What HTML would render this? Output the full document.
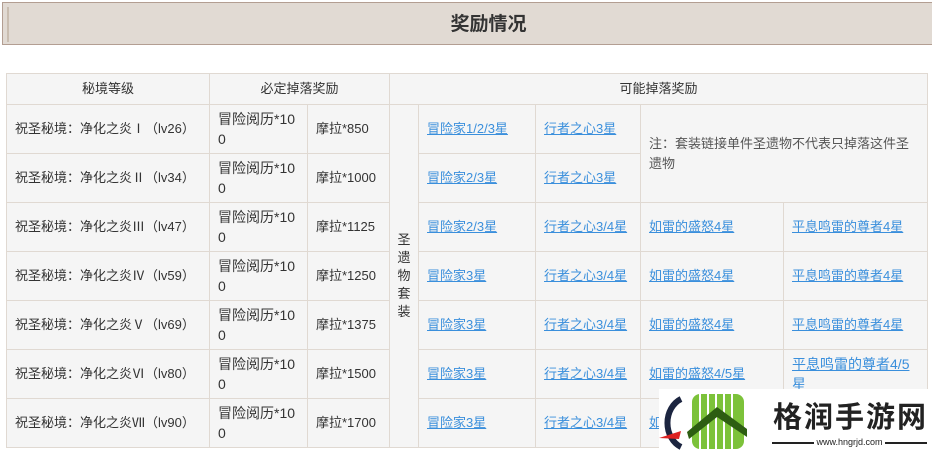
<!DOCTYPE html>
<html><head><meta charset="utf-8"><style>
*{margin:0;padding:0;box-sizing:border-box}
html,body{width:932px;height:454px;overflow:hidden}
body{background:#fff;position:relative;font-family:"Liberation Sans","Noto Sans CJK SC",sans-serif;color:#333;font-size:13px}
.bar{position:absolute;left:2px;top:2px;width:932px;height:43px;background:#e1dad3;border:1px solid #b39e92;border-right:none}
.bar h1{position:absolute;left:0;right:0;top:9px;text-align:center;font-size:19px;font-weight:bold;color:#333;padding-left:40px;line-height:26px}
.orn{position:absolute;left:4px;top:4px;width:5px;height:35px;border-left:2px solid #c9bdb0}
table{position:absolute;left:6px;top:73px;border-collapse:collapse;table-layout:fixed;width:921px}
td{border:1px solid #e0d9d2;background:#f5f5f5;height:49px;line-height:20px;padding:0 8px;vertical-align:middle;word-break:break-all}
tr.h td{height:31px;text-align:center}
td.w{font-size:14px}
a{color:#3a8fdc;text-decoration:underline}
.v{text-align:center;padding:0 6px;line-height:18px}
</style></head><body>
<div class="bar"><div class="orn"></div><h1>奖励情况</h1></div>
<table>
<colgroup><col style="width:203px"><col style="width:98px"><col style="width:82px"><col style="width:29px"><col style="width:117px"><col style="width:105px"><col style="width:143px"><col style="width:144px"></colgroup>
<tr class="h"><td>秘境等级</td><td colspan="2">必定掉落奖励</td><td colspan="5">可能掉落奖励</td></tr>
<tr><td>祝圣秘境：净化之炎Ⅰ（lv26）</td><td class="w">冒险阅历*100</td><td>摩拉*850</td><td rowspan="7" class="v">圣<br>遗<br>物<br>套<br>装</td><td><a>冒险家1/2/3星</a></td><td><a>行者之心3星</a></td><td colspan="2" rowspan="2" style="color:#555">注：套装链接单件圣遗物不代表只掉落这件圣遗物</td></tr>
<tr><td>祝圣秘境：净化之炎Ⅱ（lv34）</td><td class="w">冒险阅历*100</td><td>摩拉*1000</td><td><a>冒险家2/3星</a></td><td><a>行者之心3星</a></td></tr>
<tr><td>祝圣秘境：净化之炎Ⅲ（lv47）</td><td class="w">冒险阅历*100</td><td>摩拉*1125</td><td><a>冒险家2/3星</a></td><td><a>行者之心3/4星</a></td><td><a>如雷的盛怒4星</a></td><td><a>平息鸣雷的尊者4星</a></td></tr>
<tr><td>祝圣秘境：净化之炎Ⅳ（lv59）</td><td class="w">冒险阅历*100</td><td>摩拉*1250</td><td><a>冒险家3星</a></td><td><a>行者之心3/4星</a></td><td><a>如雷的盛怒4星</a></td><td><a>平息鸣雷的尊者4星</a></td></tr>
<tr><td>祝圣秘境：净化之炎Ⅴ（lv69）</td><td class="w">冒险阅历*100</td><td>摩拉*1375</td><td><a>冒险家3星</a></td><td><a>行者之心3/4星</a></td><td><a>如雷的盛怒4星</a></td><td><a>平息鸣雷的尊者4星</a></td></tr>
<tr><td>祝圣秘境：净化之炎Ⅵ（lv80）</td><td class="w">冒险阅历*100</td><td>摩拉*1500</td><td><a>冒险家3星</a></td><td><a>行者之心3/4星</a></td><td><a>如雷的盛怒4/5星</a></td><td style="font-size:14px"><a>平息鸣雷的尊者4/5星</a></td></tr>
<tr><td>祝圣秘境：净化之炎Ⅶ（lv90）</td><td class="w">冒险阅历*100</td><td>摩拉*1700</td><td><a>冒险家3星</a></td><td><a>行者之心3/4星</a></td><td><a>如雷的盛怒4/5星</a></td><td><a>平息鸣雷的尊者4/5星</a></td></tr>
</table>
<div style="position:absolute;left:659px;top:389px;width:273px;height:65px;background:#fff">
<svg width="90" height="65" style="position:absolute;left:0;top:0">
<path d="M22 10 A22 26 0 0 0 22 58" stroke="#1c2540" stroke-width="6" fill="none"/>
<path d="M0 49 L22 42 L20 50 Z" fill="#d22"/>
<rect x="33" y="5" width="52" height="55" rx="8" fill="#7cc23a"/>
<g stroke="#fff" stroke-width="2"><line x1="41" y1="5" x2="41" y2="60"/><line x1="49" y1="5" x2="49" y2="60"/><line x1="57" y1="5" x2="57" y2="60"/><line x1="65" y1="5" x2="65" y2="60"/><line x1="73" y1="5" x2="73" y2="60"/></g>
<path d="M28 43 L58 18 L88 40 L88 48 L58 28 L30 50 Z" fill="#2d5e12"/>
</svg>
<div style="position:absolute;left:114px;top:9px;font-size:29px;font-weight:bold;color:#222;letter-spacing:2px;font-family:'Noto Sans CJK SC',sans-serif;line-height:34px;white-space:nowrap">格润手游网</div>
<div style="position:absolute;left:113px;top:47px;width:170px;font-size:9px;line-height:12px;color:#222;white-space:nowrap"><span style="display:inline-block;width:42px;border-top:2px solid #222;vertical-align:middle"></span> www.hngrjd.com <span style="display:inline-block;width:42px;border-top:2px solid #222;vertical-align:middle"></span></div>
</div>
</body></html>
